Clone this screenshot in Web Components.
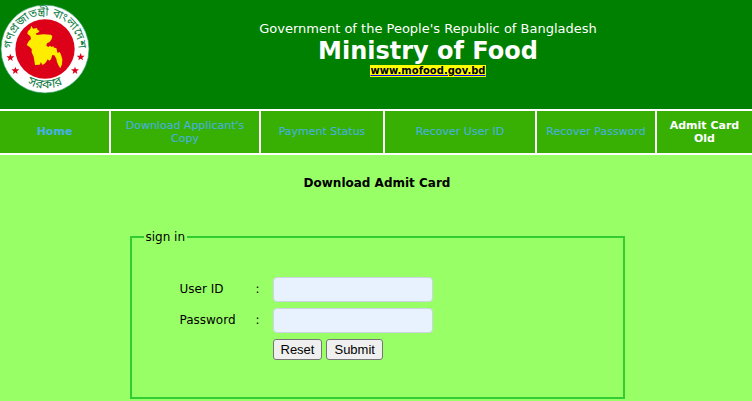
<!DOCTYPE html>
<html lang="en">
<head>
<meta charset="utf-8">
<meta name="viewport" content="width=device-width, initial-scale=1">
<title>Ministry of Food</title>
<style>
    body {
        margin: 0;
        min-height: 100vh;
        background-color: #99ff66;
        color: #000;
        font-family: Verdana, "DejaVu Sans", sans-serif;
        font-size: 12px;
    }
</style>
</head>
<body>
<site-header>
    <span slot="owner">Government of the People's Republic of Bangladesh</span>
    <span slot="name">Ministry of Food</span>
</site-header>
<site-nav>
    <nav-item strong>Home</nav-item>
    <nav-item>Download Applicant's Copy</nav-item>
    <nav-item>Payment Status</nav-item>
    <nav-item>Recover User ID</nav-item>
    <nav-item>Recover Password</nav-item>
    <nav-item strong current>Admit Card Old</nav-item>
</site-nav>
<sign-in-form>Download Admit Card</sign-in-form>

<script>
class GovSeal extends HTMLElement {
    constructor() {
        super();
        this.attachShadow({ mode: 'open' });
        const star = (x, y) => `<use href="#star" x="${x}" y="${y}"/>`;
        this.shadowRoot.innerHTML = `
            <style>
                :host { display: block; width: 90px; }
                svg { display: block; width: 100%; }
                text { font-family: "Noto Sans Bengali", "Noto Sans", sans-serif; font-size: 35px; fill: #16804a; text-anchor: middle; }
                .lower { font-size: 38px; }
            </style>
            <svg viewBox="0 0 270 284" role="img" aria-label="Government seal">
                <defs>
                    <path id="star" d="M0-12 3-4 12-4 5 2 7 10 0 5-7 10-5 2-12-4-3-4Z"/>
                    <path id="upper" d="M35 147a100 100 0 0 1 200 0"/>
                    <path id="lower" d="M17 147a118 118 0 0 0 236 0"/>
                </defs>
                <circle cx="135" cy="147" r="132" fill="#fff" stroke="#35a06b" stroke-width="2"/>
                <circle cx="135" cy="147" r="89" fill="#dc0018"/>
                <path fill="#ffed00" d="M94 77 99 86 111 84 113 90 119 93 114 98 108 100 110 105 130 103 153 104 157 109 155 117 149 126 141 130 139 137 145 141 150 137 156 142 159 137 162 143 169 144 171 152 173 159 179 156 183 164 187 178 186 193 181 205 176 197 171 186 169 176 163 166 157 165 153 178 148 182 143 178 138 187 132 193 126 194 123 186 119 194 105 195 103 182 101 170 95 157 95 147 88 140 80 135 86 124 93 117 91 109 82 101 84 93 91 87Z"/>
                <g fill="#dc0018">${star(31, 173)}${star(46, 212)}${star(242, 171)}${star(225, 212)}</g>
                <text><textPath href="#upper" startOffset="50%">গণপ্রজাতন্ত্রী বাংলাদেশ</textPath></text>
                <text class="lower"><textPath href="#lower" startOffset="50%">সরকার</textPath></text>
            </svg>`;
    }
}

class SiteHeader extends HTMLElement {
    constructor() {
        super();
        this.attachShadow({ mode: 'open' });
        this.shadowRoot.innerHTML = `
            <style>
                :host { display: block; background-color: #008000; color: #fff; }
                header { display: grid; grid-template-columns: 90px 1fr; gap: 14px; padding-bottom: 14px; }
                .title { padding-top: 21px; text-align: center; }
                p, h1 { margin: 0; }
                p { font-size: 13px; line-height: 16px; }
                h1 { font-size: 24px; line-height: 28px; }
                a { display: block; width: fit-content; margin: 0 auto; font-size: 10px; line-height: 12px; font-weight: bold; color: #000; background-color: #ff0; text-decoration: underline #00f; }
            </style>
            <header>
                <gov-seal></gov-seal>
                <div class="title">
                    <p><slot name="owner"></slot></p>
                    <h1><slot name="name"></slot></h1>
                    <a href="http://www.mofood.gov.bd">www.mofood.gov.bd</a>
                </div>
            </header>`;
    }
}

class SiteNav extends HTMLElement {
    constructor() {
        super();
        this.attachShadow({ mode: 'open' });
        this.shadowRoot.innerHTML = `
            <style>
                :host { display: block; background-color: #fff; }
                nav { display: grid; grid-template-columns: 109fr 148fr 122fr 150fr 118fr 95fr; gap: 2px; padding: 2px 0; }
            </style>
            <nav><slot></slot></nav>`;
    }
}

class NavItem extends HTMLElement {
    constructor() {
        super();
        this.attachShadow({ mode: 'open' });
        this.shadowRoot.innerHTML = `
            <style>
                :host { display: grid; min-width: 0; background-color: #38b003; font-size: 11px; line-height: 13px; }
                :host([strong]) { font-weight: bold; }
                a { display: flex; align-items: center; justify-content: center; min-height: 42px; color: #46b1e8; text-align: center; text-decoration: none; }
                span { max-width: 120px; }
                :host([current]) a { color: #fff; }
                :host([current]) span { max-width: 80px; }
            </style>
            <a href="#"><span><slot></slot></span></a>`;
    }
}

class SignInForm extends HTMLElement {
    constructor() {
        super();
        this.attachShadow({ mode: 'open' });
        this.shadowRoot.innerHTML = `
            <style>
                :host { display: block; padding: 20px 0 2px 2px; }
                h2 { margin: 0 0 39px; font-size: 12px; line-height: 16px; text-align: center; }
                fieldset { box-sizing: border-box; width: 66%; margin: 0 auto; padding: 33px 12px 37px; border: 2px solid #32cd32; }
                legend { padding: 0 2px; line-height: 14px; }
                form { display: grid; grid-template-columns: 76px 17px 160px; row-gap: 6px; align-items: center; padding-left: 36px; }
                input { box-sizing: border-box; width: 100%; height: 25px; padding: 2px 6px; border: 1px solid #ccd5e3; border-radius: 4px; background-color: #e8f2ff; font: inherit; }
                .buttons { grid-column: 3; display: flex; gap: 4px; }
                button { height: 21px; padding: 0 7px; border: 1px solid #767676; border-radius: 3px; background-color: #efefef; color: #000; font-family: "Liberation Sans", Arial, sans-serif; font-size: 13px; line-height: 15px; }
            </style>
            <h2><slot></slot></h2>
            <fieldset>
                <legend>sign in</legend>
                <form>
                    <label for="user">User ID</label><span>:</span>
                    <input id="user" type="text">
                    <label for="password">Password</label><span>:</span>
                    <input id="password" type="password">
                    <div class="buttons">
                        <button type="reset">Reset</button>
                        <button type="submit">Submit</button>
                    </div>
                </form>
            </fieldset>`;
    }
}

customElements.define('gov-seal', GovSeal);
customElements.define('site-header', SiteHeader);
customElements.define('site-nav', SiteNav);
customElements.define('nav-item', NavItem);
customElements.define('sign-in-form', SignInForm);
</script>
</body>
</html>
